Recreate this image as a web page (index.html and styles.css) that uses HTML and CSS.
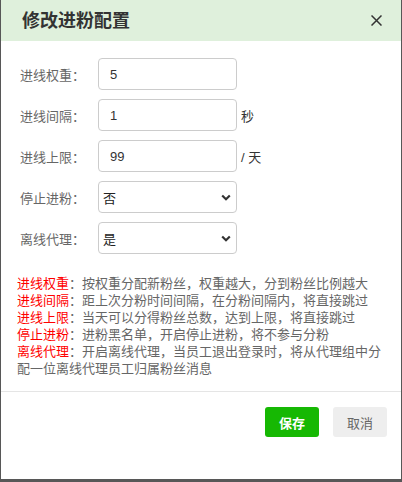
FILE: index.html
```html
<!DOCTYPE html>
<html lang="zh-CN">
<head>
<meta charset="utf-8">
<title>修改进粉配置</title>
<link rel="stylesheet" href="styles.css">
</head>
<body>
<div class="dialog">
  <div class="dlg-head">
    <span class="dlg-title">修改进粉配置</span>
    <span class="dlg-close"><svg width="11" height="11" viewBox="0 0 11 11"><path d="M0.5 0.5L10.5 10.5M10.5 0.5L0.5 10.5" stroke="#333" stroke-width="1.5" fill="none"/></svg></span>
  </div>
  <div class="dlg-body">
    <div class="form">
      <div class="row">
        <label class="lbl">进线权重：</label>
        <input class="inp" type="text" value="5">
      </div>
      <div class="row">
        <label class="lbl">进线间隔：</label>
        <input class="inp" type="text" value="1">
        <span class="unit">秒</span>
      </div>
      <div class="row">
        <label class="lbl">进线上限：</label>
        <input class="inp" type="text" value="99">
        <span class="unit">/ 天</span>
      </div>
      <div class="row">
        <label class="lbl">停止进粉：</label>
        <div class="sel">
          <span class="sel-val">否</span>
          <svg class="chev" width="10" height="7" viewBox="0 0 10 7"><path d="M1.2 1.5L5 5.2L8.8 1.5" stroke="#333" stroke-width="2.2" fill="none"/></svg>
        </div>
      </div>
      <div class="row">
        <label class="lbl">离线代理：</label>
        <div class="sel">
          <span class="sel-val">是</span>
          <svg class="chev" width="10" height="7" viewBox="0 0 10 7"><path d="M1.2 1.5L5 5.2L8.8 1.5" stroke="#333" stroke-width="2.2" fill="none"/></svg>
        </div>
      </div>
    </div>
    <div class="notes">
      <p><span class="key">进线权重</span>：按权重分配新粉丝，权重越大，分到粉丝比例越大</p>
      <p><span class="key">进线间隔</span>：距上次分粉时间间隔，在分粉间隔内，将直接跳过</p>
      <p><span class="key">进线上限</span>：当天可以分得粉丝总数，达到上限，将直接跳过</p>
      <p><span class="key">停止进粉</span>：进粉黑名单，开启停止进粉，将不参与分粉</p>
      <p><span class="key">离线代理</span>：开启离线代理，当员工退出登录时，将从代理组中分配一位离线代理员工归属粉丝消息</p>
    </div>
  </div>
  <div class="dlg-foot">
    <button class="btn btn-save">保存</button>
    <button class="btn btn-cancel">取消</button>
  </div>
</div>
</body>
</html>
```
FILE: styles.css
```css
* { box-sizing: border-box; }
html, body { margin: 0; padding: 0; }
body {
  background: #575757;
  width: 402px;
  height: 482px;
  font-family: "Liberation Sans", "Noto Sans CJK SC", sans-serif;
  color: #333;
}
.dialog {
  margin-left: 1px;
  width: 400px;
  height: 479px;
  background: #fff;
  display: flex;
  flex-direction: column;
}
.dlg-head {
  height: 41px;
  background: #dff0dc;
  display: flex;
  align-items: center;
  justify-content: space-between;
  padding: 0 19px 0 21px;
}
.dlg-title {
  font-size: 18px;
  font-weight: bold;
  color: #333;
  line-height: 1;
}
.dlg-close { display: flex; }
.dlg-body {
  padding: 17px 0 0 0;
  height: 351px;
  border-bottom: 1px solid #e5e5e5;
}
.form {
  display: flex;
  flex-direction: column;
  gap: 9px;
  padding-left: 19px;
}
.row {
  display: flex;
  align-items: center;
  height: 32px;
}
.lbl {
  width: 78px;
  font-size: 13px;
  color: #666;
}
.inp {
  width: 139px;
  height: 32px;
  border: 1px solid #ccc;
  border-radius: 4px;
  padding: 0 11px;
  font-family: "Liberation Sans", "Noto Sans CJK SC", sans-serif;
  font-size: 13px;
  color: #333;
  outline: none;
}
.unit {
  margin-left: 4px;
  font-size: 13px;
  color: #333;
}
.sel {
  width: 139px;
  height: 32px;
  border: 1px solid #ccc;
  border-radius: 4px;
  display: flex;
  align-items: center;
  justify-content: space-between;
  padding: 0 5px 0 4px;
}
.sel-val { font-size: 13px; color: #222; }
.notes {
  padding: 21px 12px 0 16px;
  width: 400px;
}
.notes p {
  margin: 0;
  font-size: 13px;
  line-height: 17px;
  color: #666;
}
.key { color: #f00; display: inline-block; line-height: 17px; }
.dlg-foot {
  display: flex;
  justify-content: flex-end;
  gap: 14px;
  padding: 15px 14px 0 0;
}
.btn {
  width: 54px;
  height: 30px;
  border: none;
  border-radius: 3px;
  font-family: "Liberation Sans", "Noto Sans CJK SC", sans-serif;
  font-size: 13px;
  padding: 0;
}
.btn-save { background: #16b803; color: #fff; font-weight: bold; }
.btn-cancel { background: #eee; color: #666; }
```
